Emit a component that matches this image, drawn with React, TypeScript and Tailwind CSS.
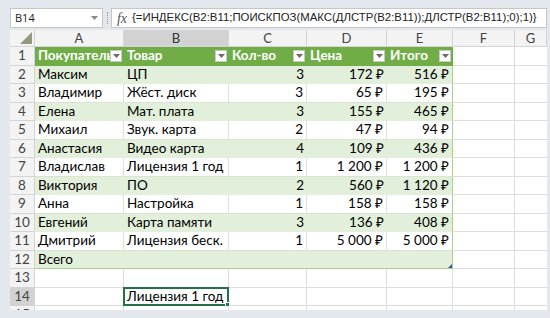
import React from "react";

const COLS = "grid-cols-[25px_89px_105px_78px_80px_66px_62px_1fr]";

const rows: string[][] = [
  ["Максим", "ЦП", "3", "172 ₽", "516 ₽"],
  ["Владимир", "Жёст. диск", "3", "65 ₽", "195 ₽"],
  ["Елена", "Мат. плата", "3", "155 ₽", "465 ₽"],
  ["Михаил", "Звук. карта", "2", "47 ₽", "94 ₽"],
  ["Анастасия", "Видео карта", "4", "109 ₽", "436 ₽"],
  ["Владислав", "Лицензия 1 год", "1", "1 200 ₽", "1 200 ₽"],
  ["Виктория", "ПО", "2", "560 ₽", "1 120 ₽"],
  ["Анна", "Настройка", "1", "158 ₽", "158 ₽"],
  ["Евгений", "Карта памяти", "3", "136 ₽", "408 ₽"],
  ["Дмитрий", "Лицензия беск.", "1", "5 000 ₽", "5 000 ₽"],
];

function Filter() {
  return (
    <span className="absolute right-[2px] top-[3px] w-[12px] h-[12px] bg-white border border-[#c8c8c8] flex items-center justify-center">
      <svg width="7" height="4" viewBox="0 0 7 4">
        <path d="M0 0H7L3.5 4Z" fill="#6b6b6b" />
      </svg>
    </span>
  );
}

function RowHead({ n, sel }: { n: number; sel?: boolean }) {
  return (
    <div
      className={`flex items-center justify-center border-r border-b border-[#d4d4d4] text-[#444] ${
        sel ? "bg-[#d2d2d2]" : "bg-[#f3f3f3]"
      }`}
    >
      {n}
    </div>
  );
}

export default function App() {
  return (
    <div
      className="w-[550px] h-[318px] bg-[#e3e8ee] pl-[10px] pr-[3px] pt-[8px] overflow-hidden"
      style={{ fontFamily: "'Open Sans', 'Noto Sans', sans-serif" }}
    >
      {/* formula bar */}
      <div className="flex h-[20px] items-stretch">
        <div className="w-[93px] bg-white border border-[#c6c6c6] flex items-center justify-between pl-[4px] pr-[4px] text-[11px] text-[#222]">
          <span>B14</span>
          <svg width="7" height="4" viewBox="0 0 7 4">
            <path d="M0 0H7L3.5 4Z" fill="#8a8a8a" />
          </svg>
        </div>
        <div className="w-[8px] flex items-center justify-center">
          <span className="w-[1px] h-[12px] border-l border-dotted border-[#9a9a9a]" />
        </div>
        <div className="flex-1 bg-white border border-[#c6c6c6] flex items-center">
          <span
            className="w-[20px] text-center text-[#555] text-[14px] italic"
            style={{ fontFamily: "'Liberation Serif', serif" }}
          >
            fx
          </span>
          <span
            className="text-[11.4px] text-[#222] whitespace-nowrap"
            style={{ fontFamily: "'Liberation Sans', Arial, sans-serif" }}
          >
            {"{=ИНДЕКС(B2:B11;ПОИСКПОЗ(МАКС(ДЛСТР(B2:B11));ДЛСТР(B2:B11);0);1)}"}
          </span>
        </div>
      </div>

      {/* sheet */}
      <div
        className="mt-[2px] h-[280px] overflow-hidden bg-white text-[13.5px] leading-none text-black"
        style={{ fontFamily: "Lato, 'Open Sans', sans-serif" }}
      >
        {/* column headers */}
        <div className={`grid ${COLS} h-[17px] text-[#444] text-[13px]`}>
          <div className="relative bg-[#f3f3f3] border-r border-b border-[#d4d4d4]">
            <svg className="absolute right-[2px] bottom-[2px]" width="12" height="12" viewBox="0 0 12 12">
              <path d="M12 0V12H0Z" fill="#8f9b7c" />
            </svg>
          </div>
          {["A", "B", "C", "D", "E", "F", "G"].map((c) => (
            <div
              key={c}
              className={`flex items-center justify-center border-r border-b border-[#d4d4d4] ${
                c === "B" ? "bg-[#d2d2d2] text-[#333]" : "bg-[#f3f3f3]"
              }`}
            >
              {c}
            </div>
          ))}
        </div>

        {/* table header row */}
        <div className={`grid ${COLS} h-[18.5px]`}>
          <RowHead n={1} />
          {["Покупатель", "Товар", "Кол-во", "Цена", "Итого"].map((h) => (
            <div
              key={h}
              className="relative bg-[#70ad47] text-white font-bold flex items-center pl-[3px] overflow-hidden whitespace-nowrap border-b border-[#70ad47]"
            >
              {h}
              <Filter />
            </div>
          ))}
          <div className="border-r border-b border-[#dcdcdc]" />
          <div className="border-b border-[#dcdcdc]" />
        </div>

        {/* data rows */}
        {rows.map((r, i) => {
          const green = i % 2 === 0;
          const cell = green
            ? "bg-[#e2efda] border-b border-[#e2efda]"
            : "bg-white border-r border-b border-[#d9e4d1]";
          return (
            <div key={i} className={`grid ${COLS} h-[18.5px]`}>
              <RowHead n={i + 2} />
              <div className={`${cell} flex items-center pl-[3px] whitespace-nowrap`}>{r[0]}</div>
              <div className={`${cell} flex items-center pl-[3px] whitespace-nowrap`}>{r[1]}</div>
              <div className={`${cell} flex items-center justify-end pr-[3px]`}>{r[2]}</div>
              <div className={`${cell} flex items-center justify-end pr-[3px] whitespace-nowrap`}>{r[3]}</div>
              <div
                className={`${green ? "bg-[#e2efda] border-b border-b-[#e2efda]" : "bg-white border-b border-b-[#d9e4d1]"} border-r border-r-[#a9d08e] flex items-center justify-end pr-[3px] whitespace-nowrap`}
              >
                {r[4]}
              </div>
              <div className="border-r border-b border-[#dcdcdc]" />
              <div className="border-b border-[#dcdcdc]" />
            </div>
          );
        })}

        {/* total row */}
        <div className={`grid ${COLS} h-[18.5px]`}>
          <RowHead n={12} />
          <div className="bg-[#e2efda] border-b border-[#a9d08e] flex items-center pl-[3px]">Всего</div>
          <div className="bg-[#e2efda] border-b border-[#a9d08e]" />
          <div className="bg-[#e2efda] border-b border-[#a9d08e]" />
          <div className="bg-[#e2efda] border-b border-[#a9d08e]" />
          <div className="relative bg-[#e2efda] border-b border-r border-[#a9d08e]">
            <svg className="absolute right-[0px] bottom-[0px]" width="4" height="4" viewBox="0 0 4 4">
              <path d="M4 0V4H0Z" fill="#2f5597" />
            </svg>
          </div>
          <div className="border-r border-b border-[#dcdcdc]" />
          <div className="border-b border-[#dcdcdc]" />
        </div>

        {/* row 13 */}
        <div className={`grid ${COLS} h-[18.5px]`}>
          <RowHead n={13} />
          {[0, 1, 2, 3, 4, 5].map((k) => (
            <div key={k} className="border-r border-b border-[#dcdcdc]" />
          ))}
          <div className="border-b border-[#dcdcdc]" />
        </div>

        {/* row 14 */}
        <div className={`grid ${COLS} h-[18.5px]`}>
          <RowHead n={14} sel />
          <div className="border-r border-b border-[#dcdcdc]" />
          <div className="relative border-2 border-[#217346] flex items-center pl-[2px] whitespace-nowrap -mt-[1px] -ml-[1px]">
            Лицензия 1 год
            <span className="absolute -right-[3px] -bottom-[3px] w-[5px] h-[5px] bg-[#217346] border border-white" />
          </div>
          {[0, 1, 2, 3].map((k) => (
            <div key={k} className="border-r border-b border-[#dcdcdc]" />
          ))}
          <div className="border-b border-[#dcdcdc]" />
        </div>

        {/* partial row 15 */}
        <div className={`grid ${COLS} h-[18.5px]`}>
          <RowHead n={15} />
          {[0, 1, 2, 3, 4, 5].map((k) => (
            <div key={k} className="border-r border-[#dcdcdc]" />
          ))}
          <div />
        </div>
      </div>
    </div>
  );
}
